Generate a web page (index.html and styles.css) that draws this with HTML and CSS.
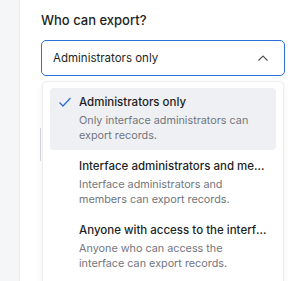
FILE: index.html
```html
<!DOCTYPE html>
<html>
<head>
  <title>Export settings</title>
  <link rel="stylesheet" href="styles.css">
</head>
<body>
  <div class="sidebar"></div>
  <div class="main">
    <label class="fieldLabel">Who can export?</label>
    <div class="select">
      <span>Administrators only</span>
      <svg class="chevron" width="12" height="8" viewBox="0 0 12 8"><path d="M1.5 6.5 L6 2 L10.5 6.5" fill="none" stroke="#555" stroke-width="1.2"/></svg>
    </div>
    <div class="behind"></div>
    <ul class="menu">
      <li class="option selected">
        <svg class="check" width="14" height="12" viewBox="0 0 14 12"><path d="M1.5 6.5 L5 10 L12.5 2" fill="none" stroke="#2d6fd6" stroke-width="1.3"/></svg>
        <div class="optionTitle">Administrators only</div>
        <div class="optionDesc">Only interface administrators can export records.</div>
      </li>
      <li class="option">
        <div class="optionTitle">Interface administrators and members can export</div>
        <div class="optionDesc">Interface administrators and members can export records.</div>
      </li>
      <li class="option">
        <div class="optionTitle">Anyone with access to the interface</div>
        <div class="optionDesc">Anyone who can access the interface can export records.</div>
      </li>
    </ul>
  </div>
</body>
</html>
```

FILE: styles.css
```css
body { margin: 0; font-family: Inter, "Noto Sans", sans-serif; display: flex; height: 281px; overflow: hidden; background: white; }
.sidebar { width: 19px; background-color: #f5f6f8; border-right: 1px solid #e9eaed; flex-shrink: 0; }
.main { position: relative; padding: 12px 13px 0 21px; flex: 1; min-width: 0; }
.fieldLabel { display: block; font-size: 13px; font-weight: 500; color: #1d1f25; line-height: 17px; }
.select {
  margin-top: 11px;
  height: 34px;
  border: 1px solid #2d6fd6;
  border-radius: 5px;
  display: flex;
  align-items: center;
  justify-content: space-between;
  padding: 0 15px 0 11px;
  font-size: 11.5px;
  color: #1d1f25;
}
.chevron { display: block; }
.behind {
  position: absolute;
  left: 20px;
  top: 128px;
  width: 1px;
  height: 33px;
  background-color: #d6d8dd;
}
.menu {
  list-style: none;
  margin: 5px 1px 0 1px;
  padding: 6px 7px;
  border: 1px solid #eceef1;
  border-radius: 5px;
  box-shadow: 0 2px 6px rgba(0, 0, 0, 0.06);
  background: white;
  position: relative;
}
.option { position: relative; padding: 6px 8px 7px 29px; border-radius: 4px; margin-bottom: 2px; }
.option.selected { background-color: #eef0f3; }
.check { position: absolute; left: 8px; top: 8px; }
.optionTitle { font-size: 11.5px; font-weight: 500; color: #1d1f25; line-height: 16px; white-space: nowrap; overflow: hidden; text-overflow: ellipsis; }
.optionDesc { font-size: 10.8px; color: #72767e; line-height: 14.5px; margin-top: 4px; max-width: 180px; }
```
